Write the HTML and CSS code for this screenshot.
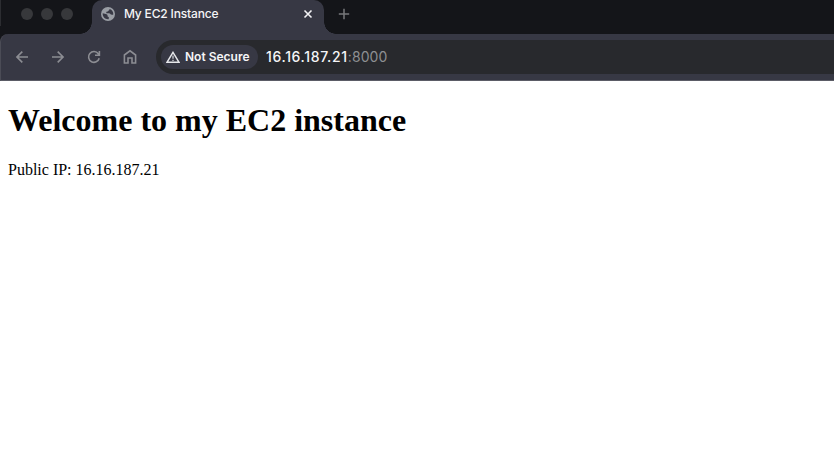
FILE: index.html
```html
<!DOCTYPE html>
<html lang="en">
<head>
<meta charset="utf-8">
<title>My EC2 Instance</title>
<link rel="stylesheet" href="styles.css">
</head>
<body>
<div class="browser">
  <header class="tabstrip">
    <div class="lights"><i></i><i></i><i></i></div>
    <div class="tab">
      <svg class="globe" width="14" height="14" viewBox="0 0 14 14"><circle cx="7" cy="7" r="7" fill="#9a9ea5"/><path d="M1.7 6.3 L4.8 7.1 Q6.5 7.3 6.6 8.5 L6.6 9.4 Q8 9.5 7.9 10.7 L7.6 12.2 C4 12.5 1.4 9.8 1.7 6.3Z M8.6 2 C11 2.7 12.4 4.8 12.3 7.2 Q12 8.1 11.2 7.7 L9.8 7.6 Q9.2 6.3 7.7 6.3 L5.4 6.2 Q4.8 5.1 5.9 4.6 L7 4.4 Q7 3.4 8.2 3.2Z" fill="#373844"/></svg>
      <span class="tab-title">My EC2 Instance</span>
      <svg class="close" width="10" height="10" viewBox="0 0 10 10"><path d="M1.5 1.5 8.5 8.5M8.5 1.5 1.5 8.5" stroke="#f3f3f5" stroke-width="1.6"/></svg>
    </div>
    <svg class="plus" width="12" height="12" viewBox="0 0 12 12"><path d="M6 .8V11.2M.8 6H11.2" stroke="#77787b" stroke-width="1.5"/></svg>
  </header>
  <nav class="toolbar">
    <svg class="nav-icon" width="16" height="16" viewBox="0 0 16 16"><path d="M14 8H3.2M8.3 2.6 2.9 8 8.3 13.4"/></svg>
    <svg class="nav-icon" width="16" height="16" viewBox="0 0 16 16"><path d="M2 8H12.8M7.7 2.6 13.1 8 7.7 13.4"/></svg>
    <svg class="nav-icon" width="16" height="16" viewBox="0 0 16 16"><path d="M13.2 9.2A5.4 5.4 0 1 1 12.3 4.7L13.5 6M13.4 1.9V6.3H9"/></svg>
    <svg class="nav-icon" width="16" height="16" viewBox="0 0 16 16"><path d="M2.4 6 8 1.8 13.6 6V14H10V9H6V14H2.4Z"/></svg>
    <div class="omnibox">
      <div class="chip">
        <svg width="14" height="12" viewBox="0 0 14 12"><path d="M7 1.3 13 11.3H1Z" fill="none" stroke="#e6e7ea" stroke-width="1.4"/><path d="M7 4.5V7.8M7 8.7V10" stroke="#b9bbc0" stroke-width="1.5"/></svg>
        <span class="chip-label">Not Secure</span>
      </div>
      <span class="url">16.16.187.21<span class="port">:8000</span></span>
    </div>
  </nav>
  <main class="page">
    <h1>Welcome to my EC2 instance</h1>
    <p>Public IP: 16.16.187.21</p>
  </main>
</div>
</body>
</html>
```
FILE: styles.css
```css
* { box-sizing: border-box; }
body { margin: 0; background: #fff; overflow: hidden; }
svg { display: block; flex: none; }
.browser { height: 476px; }
.tabstrip {
  display: flex;
  height: 34px;
  background: #141519;
  border-left: 1px solid #2c2d31;
  font-family: Inter, sans-serif;
}
.lights { display: flex; gap: 8px; width: 91px; padding: 8px 0 0 20px; }
.lights i { width: 12px; height: 12px; border-radius: 50%; background: #37383b; }
.tab {
  position: relative;
  display: flex;
  width: 232px;
  height: 34px;
  padding: 7px 11px 0 9px;
  border-radius: 10px 10px 0 0;
  background: #373844;
}
.tab::before, .tab::after {
  content: "";
  position: absolute;
  bottom: 0;
  width: 12px;
  height: 12px;
}
.tab::before { left: -12px; background: radial-gradient(circle at 0 0, transparent 11.5px, #373844 12px); }
.tab::after { right: -12px; background: radial-gradient(circle at 100% 0, transparent 11.5px, #373844 12px); }
.tab-title {
  margin-left: 9px;
  color: #f4f4f6;
  font-size: 12px;
  font-weight: 500;
  line-height: 14px;
  letter-spacing: -0.17px;
  white-space: nowrap;
}
.close { margin: 2px 0 0 auto; }
.plus { margin: 8px 0 0 14px; }
.toolbar {
  display: flex;
  align-items: flex-start;
  height: 47px;
  padding: 6px 0 0 13px;
  gap: 20px;
  background: #373844;
  border-left: 1px solid #4b4c56;
  border-bottom: 1px solid #5b5c66;
  border-top-left-radius: 8px;
  box-shadow: -8px -8px 0 #141519;
  font-family: Inter, sans-serif;
}
.nav-icon { margin-top: 9px; fill: none; stroke: #8c8d93; stroke-width: 1.6; }
.omnibox {
  display: flex;
  align-items: center;
  flex: 1;
  height: 34px;
  margin-left: -2px;
  padding-left: 5px;
  border-radius: 17px 0 0 17px;
  background: #28292d;
}
.chip {
  display: flex;
  align-items: center;
  width: 97px;
  height: 24px;
  padding-left: 5px;
  gap: 5px;
  border-radius: 12px;
  background: #373844;
}
.chip-label { padding-bottom: 2px; color: #f5f5f7; font-size: 12px; font-weight: 600; white-space: nowrap; }
.url { margin-left: 8px; padding-bottom: 2px; color: #f5f5f7; font-size: 14px; font-weight: 500; letter-spacing: 0.65px; white-space: nowrap; }
.port { color: #8e8f92; font-weight: 400; letter-spacing: 0.1px; }
.page { padding: 0 8px; font-family: "Liberation Serif", serif; color: #000; }
.page h1 { margin: 0; padding-top: 21px; font-size: 32px; line-height: 37px; }
.page p { margin: 22px 0 0; font-size: 16px; line-height: 18px; }
```
